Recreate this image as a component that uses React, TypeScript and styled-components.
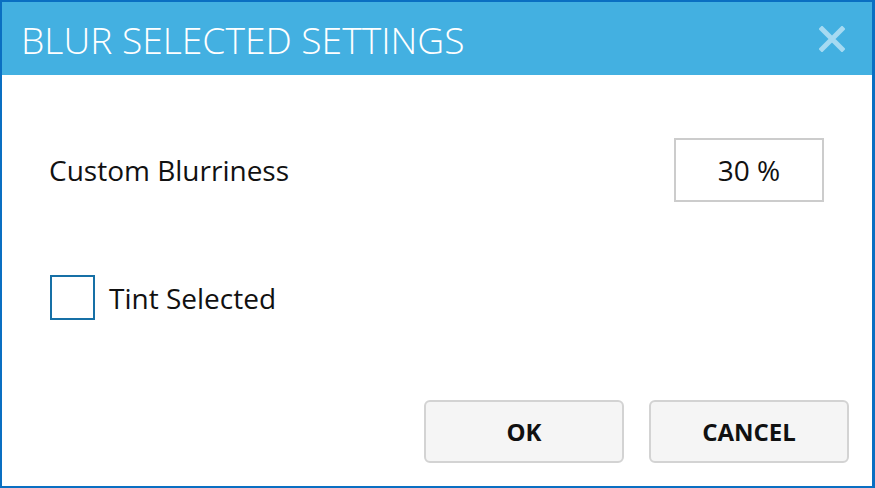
import React from "react";
import styled, { createGlobalStyle } from "styled-components";

const Global = createGlobalStyle`
  html, body { margin: 0; padding: 0; background: #fff; }
  body { font-family: "Open Sans", "Noto Sans", sans-serif; }
  * { box-sizing: border-box; }
`;

const Dialog = styled.div`
  width: 875px;
  height: 488px;
  border: 2px solid #0a6fc2;
  border-right-width: 3px;
  display: flex;
  flex-direction: column;
  background: #fff;
`;

const Header = styled.div`
  height: 73px;
  background: #43b0e1;
  display: flex;
  align-items: center;
  justify-content: space-between;
  padding: 0 26px 0 19px;
`;

const Title = styled.h1`
  margin: 0;
  font-family: "Open Sans", sans-serif;
  font-weight: 300;
  font-size: 37.2px;
  color: #fff;
  line-height: 1;
  margin-top: 2px;
`;

const CloseButton = styled.button`
  width: 28px;
  height: 28px;
  padding: 0;
  border: none;
  background: transparent;
  display: flex;
  align-items: center;
  justify-content: center;
  cursor: pointer;
`;

const Body = styled.div`
  flex: 1;
  display: flex;
  flex-direction: column;
  padding: 63px 0 23px 47px;
`;

const SettingRow = styled.div`
  display: flex;
  align-items: center;
  justify-content: space-between;
  padding-right: 48px;
  height: 64px;
`;

const Label = styled.span`
  font-size: 28px;
  color: #111;
`;

const ValueBox = styled.div`
  width: 150px;
  height: 64px;
  border: 2px solid #cccccc;
  display: flex;
  align-items: center;
  justify-content: center;
  font-size: 28px;
  color: #111;
`;

const CheckRow = styled.label`
  display: flex;
  align-items: center;
  gap: 14px;
  margin-top: 73px;
  margin-left: 1px;
  height: 45px;
`;

const CheckBox = styled.span`
  width: 45px;
  height: 45px;
  border: 2px solid #1670a6;
  background: #fff;
`;

const Footer = styled.div`
  margin-top: auto;
  display: flex;
  justify-content: flex-end;
  gap: 25px;
  padding-right: 23px;
`;

const ActionButton = styled.button`
  width: 200px;
  height: 63px;
  background: #f5f5f5;
  border: 2px solid #d3d3d3;
  border-radius: 6px;
  font-family: "Open Sans", sans-serif;
  font-weight: 700;
  font-size: 24px;
  color: #111;
  cursor: pointer;
`;

export default function App() {
  return (
    <>
      <Global />
      <Dialog>
        <Header>
          <Title>BLUR SELECTED SETTINGS</Title>
          <CloseButton aria-label="close">
            <svg width="26" height="26" viewBox="0 0 26 26">
              <path d="M3 3 L23 23 M23 3 L3 23" stroke="#a6daf2" strokeWidth="5" strokeLinecap="square" />
            </svg>
          </CloseButton>
        </Header>
        <Body>
          <SettingRow>
            <Label>Custom Blurriness</Label>
            <ValueBox>30 %</ValueBox>
          </SettingRow>
          <CheckRow>
            <CheckBox />
            <Label>Tint Selected</Label>
          </CheckRow>
          <Footer>
            <ActionButton>OK</ActionButton>
            <ActionButton>CANCEL</ActionButton>
          </Footer>
        </Body>
      </Dialog>
    </>
  );
}
